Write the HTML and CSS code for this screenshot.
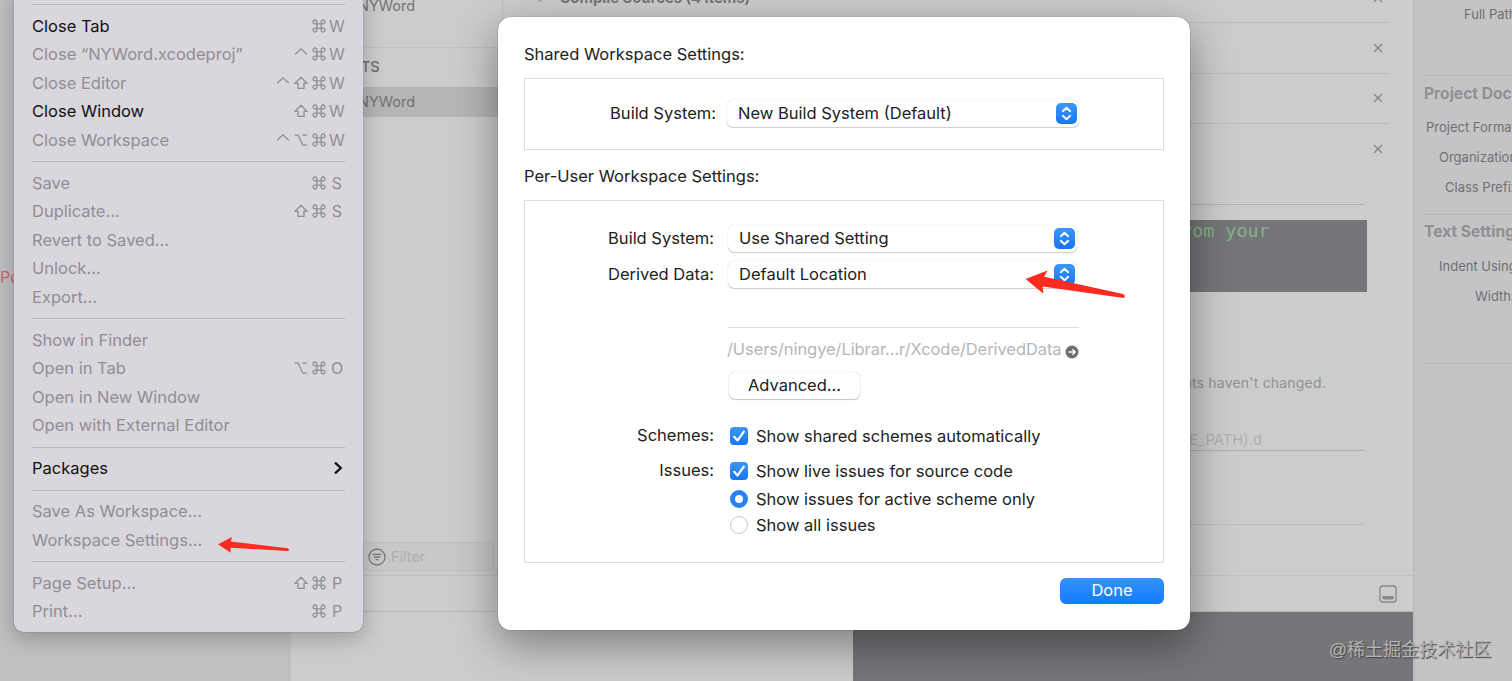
FILE: index.html
```
<!DOCTYPE html>
<html lang="en">
<head>
  <meta charset="UTF-8">
  <meta name="viewport" content="width=device-width, initial-scale=1.0">
  <title>Workspace Settings</title>
  <link rel="stylesheet" href="styles.css">
</head>
<body>
<!-- Shared icons -->
<svg class="icon-defs">
  <symbol id="cmd" viewBox="0 0 14 14">
    <path d="M4.8 4.8H3a1.9 1.9 0 1 1 1.8-1.9v8.2A1.9 1.9 0 1 1 3 9.2h8a1.9 1.9 0 1 1-1.8 1.9V2.9A1.9 1.9 0 1 1 11 4.8z"/>
  </symbol>
  <symbol id="shift" viewBox="0 0 14 14">
    <path d="M7 1.2 13 7.4H10v5H4v-5H1z"/>
  </symbol>
  <symbol id="ctrl" viewBox="0 0 14 14">
    <path d="M1.2 7.2 7 1.8l5.8 5.4"/>
  </symbol>
  <symbol id="opt" viewBox="0 0 14 14">
    <path d="M.8 2.2h3.4l4.6 10h4.4M8.2 2.2h5"/>
  </symbol>
  <symbol id="updown" viewBox="0 0 21 21">
    <path d="M6.8 8.2 10.5 4.7l3.7 3.5M6.8 12.8l3.7 3.5 3.7-3.5"/>
  </symbol>
  <symbol id="check" viewBox="0 0 18 18">
    <path d="M4.2 9.8 7.6 13.4 13.8 4.6"/>
  </symbol>
  <symbol id="close" viewBox="0 0 10 10">
    <path d="M1 1l8 8M9 1 1 9"/>
  </symbol>
</svg>

<div class="page">
  <!-- Xcode window behind -->
  <div class="navigator"><span class="error-text">Po</span></div>

  <div class="center">
    <div class="project">
      <div class="targets">
        <div class="target first">NYWord</div>
        <div class="targets-title">TARGETS</div>
        <div class="target selected">NYWord</div>
        <div class="filter">
          <svg class="filter-icon" viewBox="0 0 18 18"><circle cx="9" cy="9" r="8"/><path d="M4.3 6.3h9.4M5.8 9h6.4M7.6 11.7h2.8"/></svg>
          Filter
        </div>
      </div>
      <div class="phases">
        <div class="phase phase-top"><span class="phase-name"><i>›</i>Compile Sources (4 items)</span><svg class="close"><use href="#close"/></svg></div>
        <div class="phase"><svg class="close"><use href="#close"/></svg></div>
        <div class="phase"><svg class="close"><use href="#close"/></svg></div>
        <div class="phase last"><svg class="close"><use href="#close"/></svg></div>
        <div class="script">
          <div class="code">from your</div>
          <p class="hint">Based on dependency analysis, runs if inputs haven't changed.</p>
          <p class="dep-file">$(DERIVED_FILE_PATH).d</p>
          <div class="script-end"></div>
        </div>
      </div>
    </div>
    <div class="debug-bar">
      <svg class="panel-icon" viewBox="0 0 18 18"><rect x="1" y="1" width="16" height="16" rx="2.6"/><rect class="fill" x="3.6" y="11" width="11" height="3.4" rx=".8"/></svg>
    </div>
    <div class="debug-area">
      <div class="variables"></div>
      <div class="console"></div>
    </div>
  </div>

  <div class="inspector">
    <div class="field path">Full Path</div>
    <h4>Project Document</h4>
    <div class="field format">Project Format</div>
    <div class="field org">Organization</div>
    <div class="field prefix">Class Prefix</div>
    <h4 class="text-settings">Text Settings</h4>
    <div class="field indent">Indent Using</div>
    <div class="field widths">Widths</div>
    <div class="inspector-end"></div>
  </div>

  <!-- File menu -->
  <div class="menu">
    <hr>
    <div class="item on"><span>Close Tab</span><span class="keys"><svg><use href="#cmd"/></svg><b>W</b></span></div>
    <div class="item"><span>Close “NYWord.xcodeproj”</span><span class="keys"><svg><use href="#ctrl"/></svg><svg><use href="#cmd"/></svg><b>W</b></span></div>
    <div class="item"><span>Close Editor</span><span class="keys"><svg><use href="#ctrl"/></svg><svg><use href="#shift"/></svg><svg><use href="#cmd"/></svg><b>W</b></span></div>
    <div class="item on"><span>Close Window</span><span class="keys"><svg><use href="#shift"/></svg><svg><use href="#cmd"/></svg><b>W</b></span></div>
    <div class="item"><span>Close Workspace</span><span class="keys"><svg><use href="#ctrl"/></svg><svg><use href="#opt"/></svg><svg><use href="#cmd"/></svg><b>W</b></span></div>
    <hr>
    <div class="item"><span>Save</span><span class="keys"><svg><use href="#cmd"/></svg><b>S</b></span></div>
    <div class="item"><span>Duplicate...</span><span class="keys"><svg><use href="#shift"/></svg><svg><use href="#cmd"/></svg><b>S</b></span></div>
    <div class="item"><span>Revert to Saved...</span></div>
    <div class="item"><span>Unlock...</span></div>
    <div class="item"><span>Export...</span></div>
    <hr>
    <div class="item"><span>Show in Finder</span></div>
    <div class="item"><span>Open in Tab</span><span class="keys"><svg><use href="#opt"/></svg><svg><use href="#cmd"/></svg><b>O</b></span></div>
    <div class="item"><span>Open in New Window</span></div>
    <div class="item"><span>Open with External Editor</span></div>
    <hr>
    <div class="item on"><span>Packages</span><svg class="chevron" viewBox="0 0 10 14"><path d="M2 1.6 7.8 7 2 12.4"/></svg></div>
    <hr>
    <div class="item"><span>Save As Workspace...</span></div>
    <div class="item"><span>Workspace Settings...</span></div>
    <hr>
    <div class="item"><span>Page Setup...</span><span class="keys"><svg><use href="#shift"/></svg><svg><use href="#cmd"/></svg><b>P</b></span></div>
    <div class="item"><span>Print...</span><span class="keys"><svg><use href="#cmd"/></svg><b>P</b></span></div>
  </div>

  <!-- Workspace settings sheet -->
  <div class="sheet">
    <div class="title">Shared Workspace Settings:</div>
    <div class="box shared">
      <div class="row">
        <label>Build System:</label>
        <div class="popup">New Build System (Default)<svg><use href="#updown"/></svg></div>
      </div>
    </div>
    <div class="title second">Per-User Workspace Settings:</div>
    <div class="box user">
      <div class="row">
        <label>Build System:</label>
        <div class="popup">Use Shared Setting<svg><use href="#updown"/></svg></div>
      </div>
      <div class="row derived">
        <label>Derived Data:</label>
        <div class="popup">Default Location<svg><use href="#updown"/></svg></div>
      </div>
      <div class="location">
        <div class="path-row"><span>/Users/ningye/Librar...r/Xcode/DerivedData</span>
          <svg viewBox="0 0 14 14"><circle cx="7" cy="7" r="6.5"/><path d="M3.6 7h6.4M7.4 4.3 10.1 7 7.4 9.7"/></svg>
        </div>
        <button class="advanced">Advanced...</button>
      </div>
      <div class="row option schemes"><label>Schemes:</label><svg class="checkbox"><use href="#check"/></svg><span>Show shared schemes automatically</span></div>
      <div class="row option issues"><label>Issues:</label><svg class="checkbox"><use href="#check"/></svg><span>Show live issues for source code</span></div>
      <div class="row option active"><label></label><i class="radio checked"></i><span>Show issues for active scheme only</span></div>
      <div class="row option all"><label></label><i class="radio"></i><span>Show all issues</span></div>
    </div>
    <button class="done">Done</button>
  </div>

  <!-- Red annotation arrows -->
  <svg class="arrow arrow-menu" viewBox="0 0 72 18"><path d="M0 8.2 14 1 12.8 5.6 69.5 12.2Q72.5 13.6 70 15L12.6 11.8 12.6 16.8Z"/></svg>
  <svg class="arrow arrow-popup" viewBox="0 0 102 28"><path d="M.6 9 22.5.5 19.2 6.8 98 24Q101.5 26 98.5 28L17.6 16.4 18.4 23.8Z"/></svg>

  <div class="watermark">@稀土掘金技术社区</div>
</div>
</body>
</html>
```
FILE: styles.css
```
body, html {
  margin: 0;
  padding: 0;
  font-family: Inter, "Noto Sans", sans-serif;
  background: #cccccc;
}

* {
  box-sizing: border-box;
}

svg {
  fill: none;
  stroke: currentColor;
  flex: none;
}

.icon-defs {
  display: none;
}

.page {
  width: 1512px;
  height: 681px;
  position: relative;
  overflow: hidden;
  display: flex;
}

/* Window behind */
.navigator {
  width: 291px;
  background: #c0c0c3;
  padding-top: 267px;
}

.error-text {
  font-size: 16px;
  color: #c96570;
}

.center {
  width: 1122px;
  display: flex;
  flex-direction: column;
}

.project {
  height: 575px;
  display: flex;
}

.targets {
  width: 212px;
  border-right: 1px solid #bfbfbf;
  display: flex;
  flex-direction: column;
  color: #727272;
  font-size: 14.5px;
}

.target {
  height: 31px;
  line-height: 31px;
  padding-left: 67px;
}

.target.first {
  margin-top: -10px;
}

.target.selected {
  height: 30px;
  line-height: 29px;
  background: #b5b5b5;
}

.targets-title {
  margin-top: 26px;
  border-top: 1px solid #c1c1c1;
  height: 40px;
  line-height: 37px;
  padding-left: 24px;
  font-weight: 500;
  letter-spacing: -0.3px;
}

.filter {
  margin-top: auto;
  margin-bottom: 4px;
  margin-left: 72px;
  margin-right: 8px;
  height: 29px;
  display: flex;
  align-items: center;
  gap: 5px;
  padding-left: 4px;
  border: 1px solid #c0c0c0;
  border-radius: 5px;
  background: #c8c8c8;
  color: #afafaf;
}

.filter-icon {
  width: 18px;
  height: 18px;
  color: #777777;
  stroke-width: 1.3;
}

.phases {
  flex: 1;
}

.phase {
  height: 50.5px;
  margin-right: 24px;
  border-bottom: 1px solid #bcbcbc;
  display: flex;
  align-items: center;
  justify-content: flex-end;
}

.phase-top {
  height: 50px;
  margin-top: -27px;
  justify-content: space-between;
}

.phase-name {
  padding-left: 34px;
  font-size: 14.8px;
  font-weight: 700;
  color: #777777;
}

.phase-name i {
  font-style: normal;
  margin-right: 16px;
  color: #a5a5a5;
}

.phase.last {
  border-bottom: none;
}

.close {
  width: 10px;
  height: 10px;
  margin-right: 6px;
  color: #858585;
  stroke-width: 1.3;
}

.script {
  margin-top: 29px;
  border-top: 1px solid #b0b0b0;
  padding-top: 15px;
  width: 862px;
}

.code {
  height: 72px;
  margin-right: -2px;
  background: #757679;
  color: #83b289;
  font-family: "DejaVu Sans Mono", "Liberation Mono", monospace;
  font-size: 18.4px;
  line-height: 22px;
  padding-left: 667px;
}

.hint {
  margin: 81px 39px 0 0;
  text-align: right;
  font-size: 14px;
  line-height: 20px;
  color: #929292;
  letter-spacing: 0.2px;
}

.dep-file {
  margin: 37px 0 0;
  padding-right: 103px;
  text-align: right;
  font-size: 14.8px;
  line-height: 20px;
  height: 21px;
  border-bottom: 1px solid #b0b0b0;
  color: #b0b0b0;
}

.script-end {
  height: 74px;
  border-bottom: 1px solid #bebebe;
}

.debug-bar {
  height: 37px;
  border-top: 1px solid #c0c0c0;
  border-bottom: 1px solid #b9b9b9;
  display: flex;
  align-items: center;
  justify-content: flex-end;
  padding-right: 16px;
}

.panel-icon {
  width: 18px;
  height: 18px;
  color: #888888;
  stroke-width: 1.3;
}

.panel-icon .fill {
  fill: #888888;
  stroke: none;
}

.debug-area {
  flex: 1;
  display: flex;
}

.variables {
  width: 562px;
}

.console {
  flex: 1;
  background: #757679;
}

.inspector {
  width: 99px;
  background: #c4c4c6;
  border-left: 2px solid #bdbdbf;
  white-space: nowrap;
  color: #707070;
  font-size: 13px;
}

.inspector h4 {
  margin: 0 0 0 9px;
  padding-top: 7px;
  height: 37px;
  line-height: 21px;
  font-size: 15.6px;
  color: #909092;
  border-top: 1px solid #b8b8ba;
}

.inspector .text-settings {
  padding-top: 6px;
}

.field {
  height: 30px;
  line-height: 30px;
}

.path {
  padding-left: 49px;
  margin-top: -1px;
  height: 76px;
}

.format {
  padding-left: 11px;
}

.org {
  padding-left: 24px;
}

.prefix {
  padding-left: 30px;
  height: 42px;
}

.indent {
  padding-left: 24px;
}

.widths {
  padding-left: 60px;
}

.inspector-end {
  margin: 52px 0 0 9px;
  border-top: 1px solid #b8b8ba;
}

/* File menu */
.menu {
  position: absolute;
  left: 14px;
  top: -11px;
  width: 349px;
  height: 642.5px;
  padding: 8px 18px 0;
  background: #d9d6dd;
  border-radius: 9px;
  box-shadow: 0 0 1px rgba(0, 0, 0, 0.6), 0 6px 22px rgba(0, 0, 0, 0.25);
  color: #908f95;
  font-size: 16.5px;
}

.menu hr {
  height: 14.3px;
  margin: 0;
  border: none;
  background: linear-gradient(#bab8be, #bab8be) 0 7px / 100% 1px no-repeat;
}

.item {
  height: 28.57px;
  display: flex;
  align-items: center;
  justify-content: space-between;
}

.item.on {
  color: #111113;
}

.keys {
  display: flex;
  align-items: center;
  margin-right: -1px;
  color: #908f95;
}

.keys svg {
  width: 14px;
  height: 14px;
  margin: 0 2px;
  stroke-width: 1.3;
}

.keys b {
  width: 18px;
  font-size: 16px;
  font-weight: 400;
  text-align: center;
}

.chevron {
  width: 10px;
  height: 14px;
  margin-right: 2px;
  stroke-width: 2.2;
}

/* Settings sheet */
.sheet {
  position: absolute;
  left: 498px;
  top: 17px;
  width: 692px;
  height: 613px;
  padding: 25px 26px 0;
  background: white;
  border-radius: 13px;
  box-shadow: 0 0 1px rgba(0, 0, 0, 0.7), 0 14px 44px rgba(0, 0, 0, 0.4);
  color: #222222;
  font-size: 16.5px;
  display: flex;
  flex-direction: column;
}

.title {
  height: 24px;
  line-height: 24px;
}

.title.second {
  margin-top: 13px;
}

.box {
  border: 1px solid #dedede;
}

.shared {
  margin-top: 12px;
  height: 72px;
  padding-top: 21px;
}

.title.second {
  margin-top: 14px;
}

.user {
  margin-top: 12px;
  height: 363px;
  padding-top: 24px;
}

.row {
  display: flex;
  align-items: center;
}

.row label {
  width: 189px;
  margin-right: 14px;
  margin-bottom: 2px;
  text-align: right;
}

.shared label {
  width: 191px;
  margin-right: 11px;
}

.popup {
  width: 349px;
  height: 27px;
  padding: 0 2px 1px 11px;
  border-radius: 6px;
  box-shadow: 0 0 1px rgba(0, 0, 0, 0.25), 0 1px 1px rgba(0, 0, 0, 0.18);
  display: flex;
  align-items: center;
  justify-content: space-between;
}

.shared .popup {
  width: 352px;
}

.popup svg {
  width: 21px;
  height: 21px;
  border-radius: 5px;
  background: linear-gradient(#3c97fb, #1776f3);
  color: white;
  stroke-width: 1.9;
  stroke-linecap: round;
  stroke-linejoin: round;
}

.derived {
  margin-top: 9px;
}

.location {
  width: 351px;
  margin: 39px 0 0 203px;
  border-top: 1px solid #dddddd;
}

.path-row {
  height: 44px;
  display: flex;
  align-items: center;
  justify-content: space-between;
  color: #b6b6b6;
  letter-spacing: -0.08px;
}

.path-row span {
  margin: 0 0 2px -1px;
}

.path-row svg {
  width: 14px;
  height: 14px;
  margin-top: 3px;
  fill: #6e6e6e;
  stroke: none;
}

.path-row path {
  fill: none;
  stroke: white;
  stroke-width: 1.4;
}

.advanced {
  display: block;
  width: 131px;
  height: 27px;
  margin-left: 1px;
  padding: 0 0 2px;
  border: none;
  border-radius: 6px;
  background: white;
  box-shadow: 0 0 1px rgba(0, 0, 0, 0.35), 0 1px 1px rgba(0, 0, 0, 0.2);
  font: inherit;
  color: inherit;
}

.option label {
  margin-right: 16px;
}

.option {
  height: 20px;
}

.option span {
  margin-left: 8px;
}

.schemes {
  margin-top: 27px;
}

.issues {
  margin-top: 15px;
}

.active {
  margin-top: 8px;
}

.all {
  margin-top: 6px;
}

.checkbox {
  width: 18px;
  height: 18px;
  border-radius: 4px;
  background: linear-gradient(#3c97fb, #1776f3);
  color: white;
  stroke-width: 2.2;
  stroke-linecap: round;
  stroke-linejoin: round;
}

.radio {
  width: 18px;
  height: 18px;
  border-radius: 50%;
  border: 1px solid #c9c9c9;
}

.radio.checked {
  border: 5px solid #2383f7;
}

.done {
  align-self: flex-end;
  width: 104px;
  height: 26px;
  margin-top: 15px;
  padding: 0 0 2px;
  border: none;
  border-radius: 6px;
  background: linear-gradient(#3593fd, #147afb);
  color: white;
  font: inherit;
}

/* Annotations */
.arrow {
  position: absolute;
  fill: #fd2b20;
  stroke: none;
}

.arrow-menu {
  left: 218px;
  top: 536px;
  width: 72px;
  height: 18px;
}

.arrow-popup {
  left: 1025px;
  top: 270px;
  width: 102px;
  height: 28px;
}

.watermark {
  position: absolute;
  right: 21px;
  top: 638px;
  font-family: "Liberation Sans", "Noto Sans CJK SC", sans-serif;
  font-size: 18px;
  line-height: 24px;
  color: #b4b4b4;
  text-shadow: 1px 1px 1px #444444;
}
```
